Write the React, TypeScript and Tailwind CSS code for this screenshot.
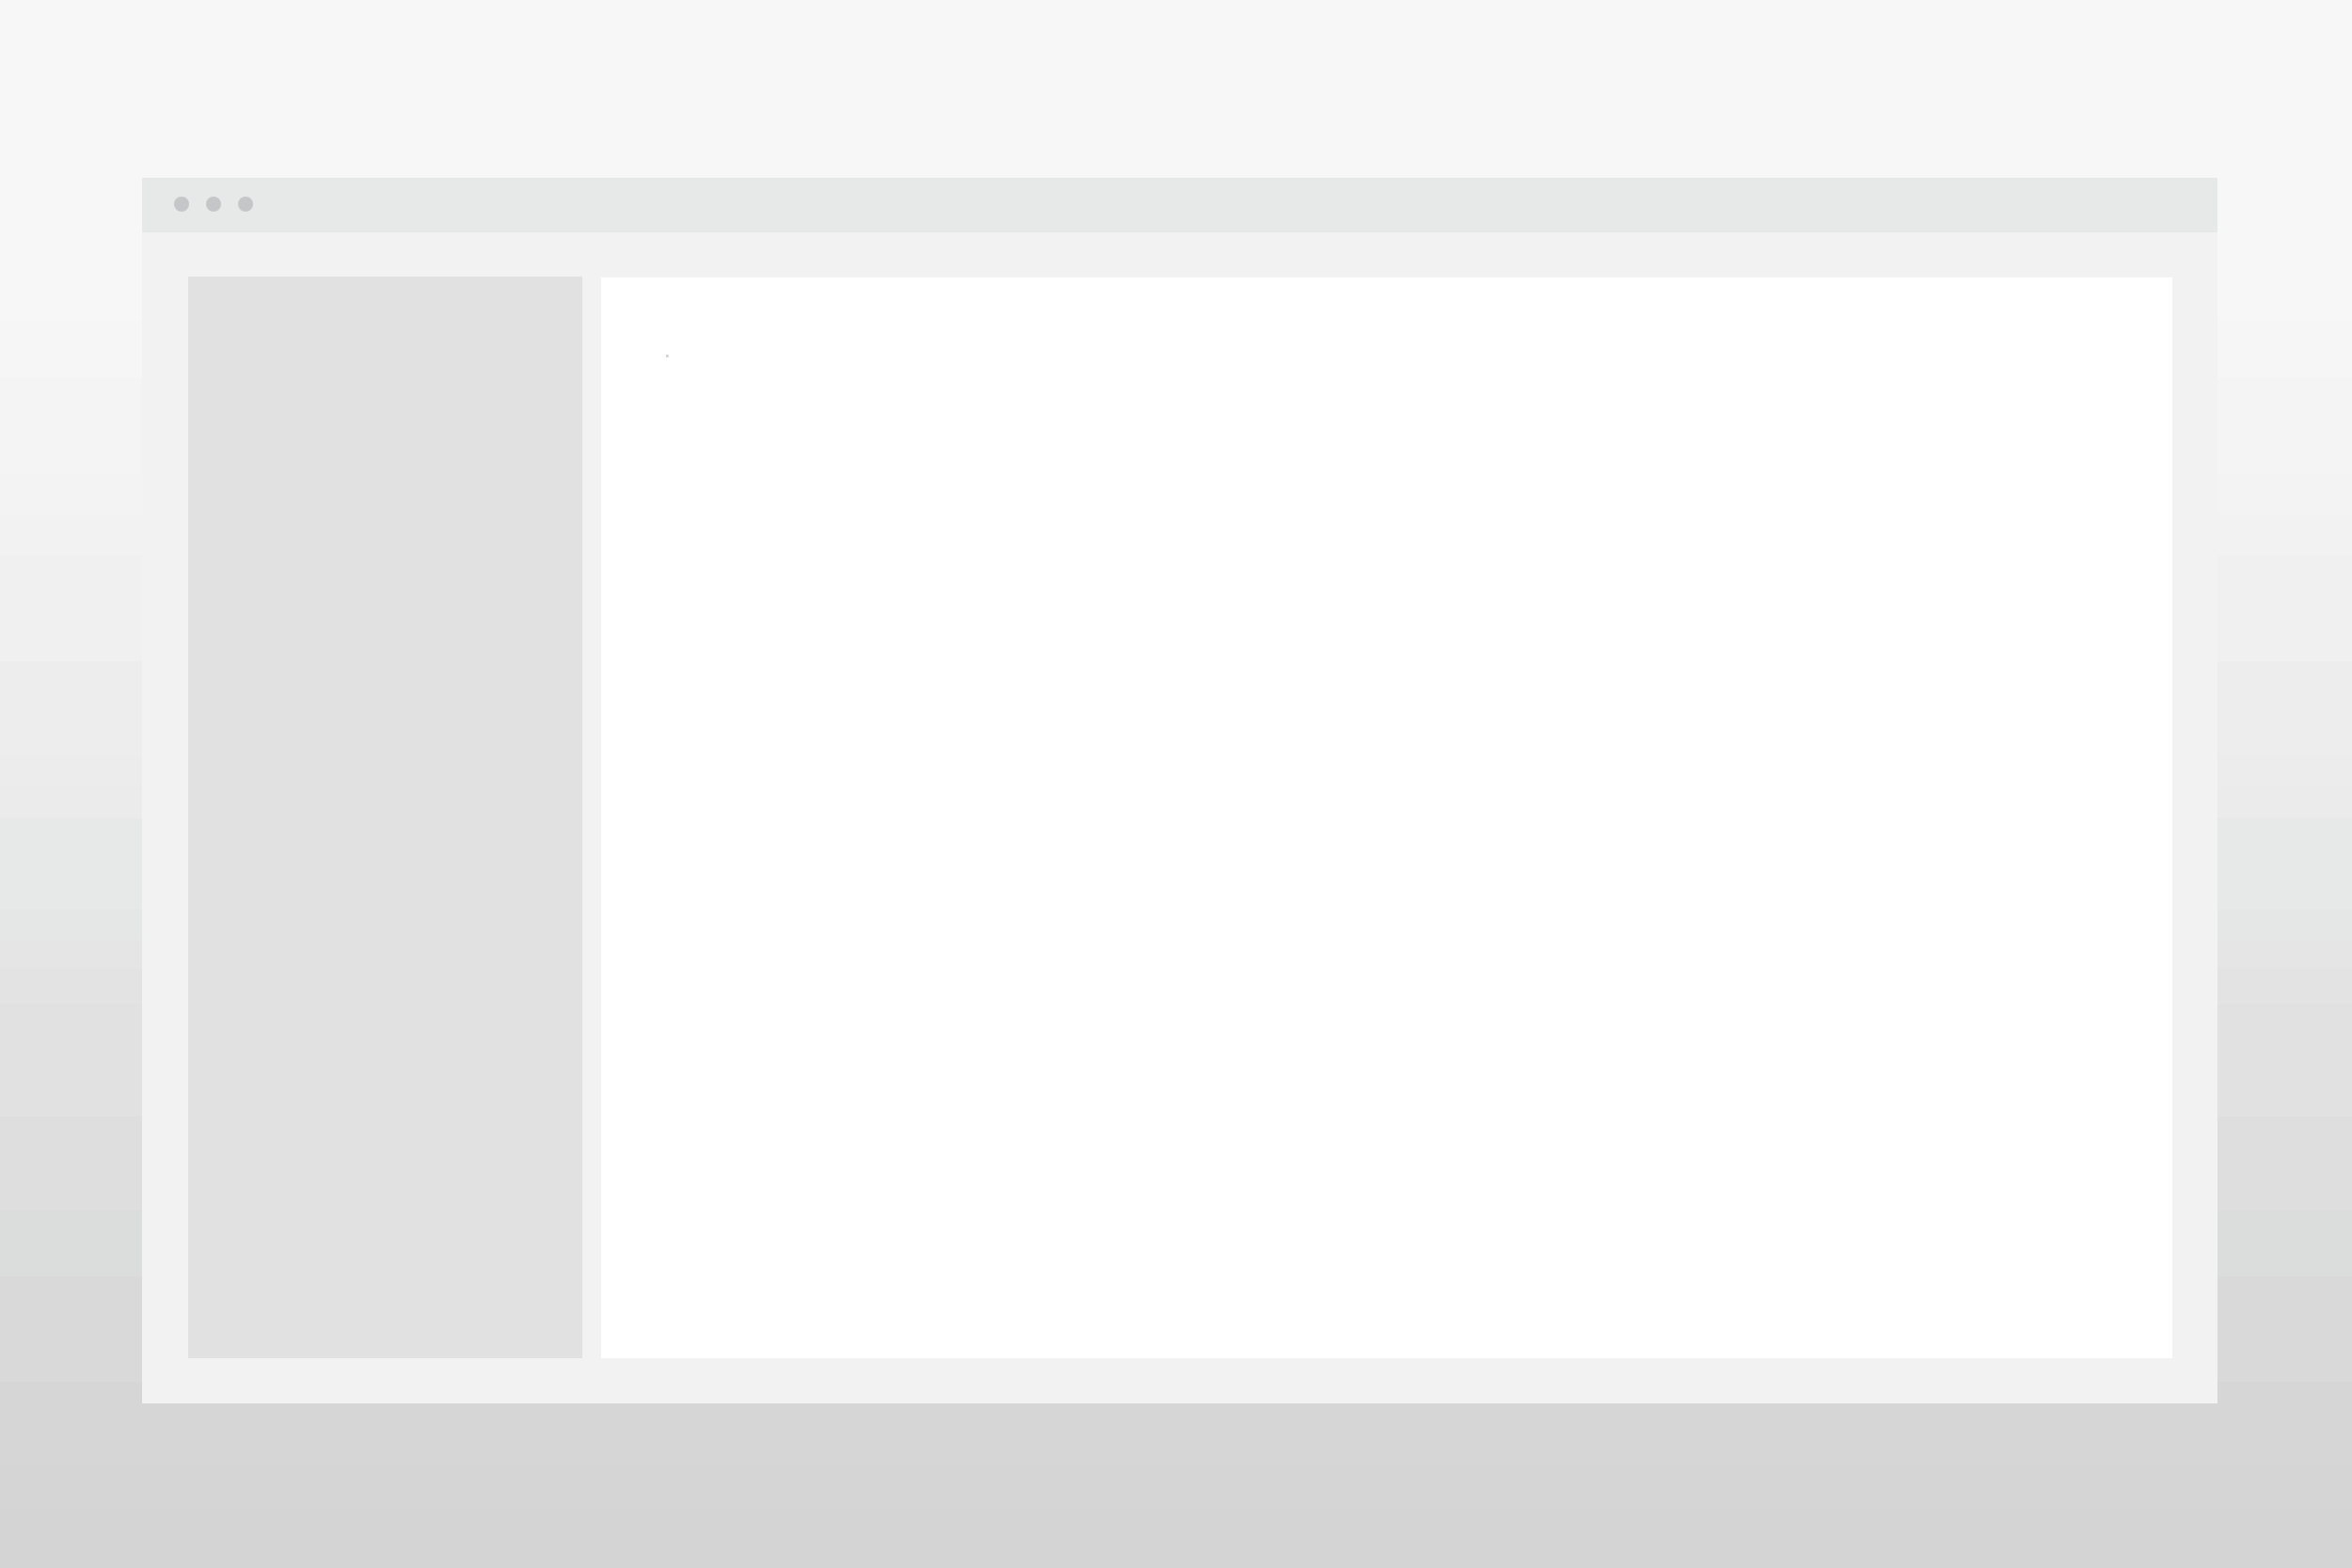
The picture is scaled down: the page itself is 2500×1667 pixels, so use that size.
const windowButtons = ["Close", "Minimize", "Maximize"];

function TitleBar() {
  return (
    <header className="flex h-[58px] items-start bg-[#e6e9e7] px-[34px] pt-5">
      <div className="flex gap-[18px]">
        {windowButtons.map((name) => (
          <button key={name} type="button" aria-label={name} className="size-4 rounded-full bg-[#c5c6c8]" />
        ))}
      </div>
    </header>
  );
}

export default function App() {
  return (
    <div className="flex min-h-screen flex-col pt-[189px] pr-[143px] pb-[175px] pl-[151px] bg-[linear-gradient(to_bottom,#f7f7f7_20.4%,#f6f6f6_20.4%_24.1%,#f4f4f4_24.1%_30.2%,#f3f3f3_30.2%_32.8%,#f2f2f2_32.8%_35.4%,#f0f0f0_35.4%_42.2%,#ededed_42.2%_48.2%,#ececec_48.2%_50.2%,#eaebea_50.2%_52.2%,#e6e9e7_52.2%_58%,#e5e7e6_58%_59.9%,#e4e5e4_59.9%_61.7%,#e3e3e3_61.7%_64%,#e1e1e1_64%_71.2%,#dedede_71.2%_77.2%,#dadddb_77.2%_81.4%,#d9d9d9_81.4%_88.1%,#d6d6d6_88.1%_93.3%,#d5d5d5_93.3%_96.2%,#d4d4d4_96.2%)]">
      <div className="flex grow flex-col bg-[#f2f2f2]">
        <TitleBar />

        {/* Sidebar + content */}
        <div className="flex grow gap-5 pt-[47px] pr-12 pb-12 pl-[49px]">
          <aside className="w-[419px] shrink-0 bg-[#e1e1e1]" />
          <main className="mt-px grow bg-white px-[69px] py-[82px]">
            <div className="size-[3px] border-r border-[#e6e6e6] bg-[#d0d0d0]" />
          </main>
        </div>
      </div>
    </div>
  );
}
